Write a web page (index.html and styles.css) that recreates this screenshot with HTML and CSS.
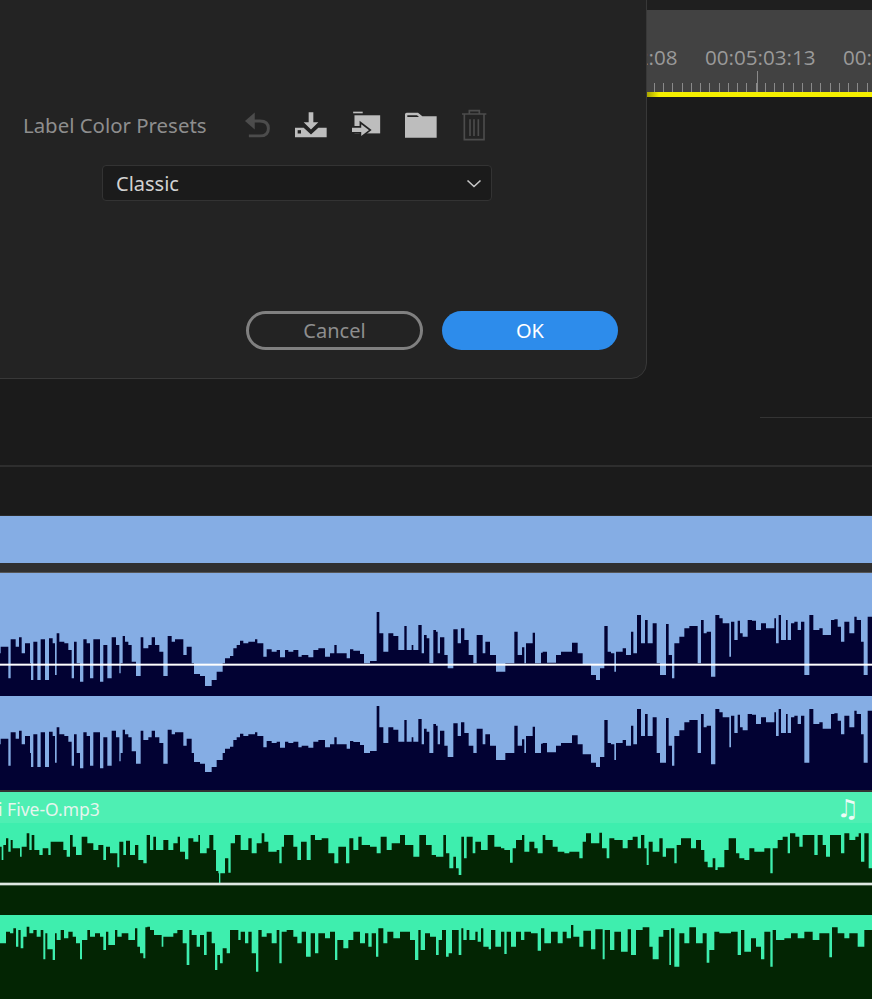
FILE: index.html
```html
<!DOCTYPE html>
<html lang="en">
<head>
    <meta charset="UTF-8">
    <title>Label Color Presets</title>
    <link rel="stylesheet" href="styles.css">
</head>
<body>
    <div class="upper">
        <div class="topbar"></div>
        <div class="ruler">
            <div class="times">
                <span>00:05:02:08</span>
                <span>00:05:03:13</span>
                <span>00:05:04:18</span>
            </div>
            <div class="ticks"><div class="major"></div></div>
        </div>
        <div class="playbar"></div>
        <div class="monitor"></div>
        <div class="monitor_line"></div>
        <div class="divider"></div>
        <div class="panel_end"></div>

        <div class="dialog">
            <div class="preset_row">
                <span class="preset_label">Label Color Presets</span>
                <svg class="icon" width="28" height="27" viewBox="728 60 86 82">
                    <path d="M764 64V116L734 90Z" fill="#4c4c4c"/>
                    <path d="M750 90H780Q806 90 806 113Q806 136 780 136H746" fill="none" stroke="#4c4c4c" stroke-width="9"/>
                </svg>
                <svg class="icon" width="32" height="27" viewBox="885 65 96 80">
                    <path d="M885 115H911L933 135L955 115H980V143H885Z" fill="#bdbdbd"/>
                    <path d="M926 68H940V98H955L933 120L911 98H926Z" fill="#bdbdbd"/>
                    <rect x="893" y="122" width="10" height="10" fill="#232323"/>
                </svg>
                <svg class="icon" width="30" height="27" viewBox="1050 62 90 82">
                    <rect x="1056" y="64" width="29" height="5" fill="#bdbdbd"/>
                    <rect x="1060" y="75" width="78" height="55" fill="#bdbdbd"/>
                    <path d="M1050 110H1078V97L1108 120L1078 143V128H1050Z" fill="#bdbdbd" stroke="#232323" stroke-width="5"/>
                </svg>
                <svg class="icon" width="32" height="26" viewBox="1213 63 96 78">
                    <path d="M1213 70Q1213 65 1218 65H1252L1265 76H1308V140H1213Z" fill="#bdbdbd"/>
                    <path d="M1220 78V73H1249L1255 78Z" fill="#232323"/>
                </svg>
                <svg class="icon" width="26" height="32" viewBox="1384 57 76 96">
                    <path d="M1386 72H1459M1408 72V62H1438V72M1393 72V149H1452V72M1410 88V138M1422 88V138M1435 88V138" fill="none" stroke="#4c4c4c" stroke-width="5"/>
                </svg>
            </div>
            <div class="dropdown">
                <span>Classic</span>
                <svg width="16" height="9" viewBox="0 0 16 9"><path d="M1.5 1.5L8 7.5L14.5 1.5" fill="none" stroke="#c8c8c8" stroke-width="1.6"/></svg>
            </div>
            <div class="buttons">
                <div class="btn cancel">Cancel</div>
                <div class="btn ok">OK</div>
            </div>
        </div>
    </div>

    <div class="clip_blue"></div>
    <div class="track_gap"></div>
    <svg class="wave" id="blue_wave" width="872" height="217" viewBox="0 0 2616 651"></svg>
    <div class="track_edge"></div>

    <div class="clip_green">
        <span class="clip_name">i Five-O.mp3</span>
        <span class="note">&#9835;</span>
    </div>
    <svg class="wave" id="green_wave" width="872" height="176" viewBox="0 0 2616 528"></svg>

    <script src="waves.js"></script>
</body>
</html>
```

FILE: styles.css
```css
html, body{
  margin:0;
  padding:0;
}
body{
  width:872px;
  height:999px;
  overflow:hidden;
  background:#1b1b1b;
  font-family:"Noto Sans", "Open Sans", sans-serif;
}
.upper{
  position:relative;
  height:516px;
  display:flex;
  flex-direction:column;
  overflow:hidden;
}
.topbar{
  height:10px;
  background:#1f1f1f;
}
.ruler{
  height:82px;
  margin-left:647px;
  background:#424242;
  display:flex;
  flex-direction:column;
  overflow:hidden;
}
.times{
  display:flex;
  gap:27px;
  margin:34px 0 0 -80px;
  height:27px;
  line-height:27px;
  font-family:"Open Sans", sans-serif;
  font-size:20.6px;
  color:#9a9a9a;
  white-space:nowrap;
}
.times span{
  flex:0 0 111px;
}
.ticks{
  position:relative;
  height:9px;
  margin-top:12px;
  background:repeating-linear-gradient(90deg, transparent 0, transparent 7px, #8a8a8a 7px, #8a8a8a 8px, transparent 8px, transparent 9.25px);
}
.ticks .major{
  position:absolute;
  left:110px;
  bottom:0;
  width:1px;
  height:21px;
  background:#8a8a8a;
}
.playbar{
  height:5px;
  margin-left:647px;
  background:linear-gradient(90deg, #a8a400 0, #f5f000 12px);
}
.monitor{
  height:320px;
}
.monitor_line{
  height:1px;
  margin-left:760px;
  background:#343434;
}
.divider{
  height:2px;
  margin-top:47px;
  background:#2e2e2e;
}
.panel_end{
  height:1px;
  margin-top:48px;
  background:#2a2a2a;
}

.dialog{
  position:absolute;
  left:-20px;
  top:-20px;
  width:667px;
  height:399px;
  box-sizing:border-box;
  padding:128px 28px 28px 42px;
  display:flex;
  flex-direction:column;
  background:#232323;
  border:1px solid #383838;
  border-radius:16px;
}
.preset_row{
  display:flex;
  align-items:center;
  height:31px;
  gap:24px;
}
.preset_label{
  width:196px;
  font-size:20.4px;
  color:#8e8e8e;
  white-space:nowrap;
}
.icon{
  flex:none;
}
.dropdown{
  display:flex;
  align-items:center;
  justify-content:space-between;
  box-sizing:border-box;
  width:390px;
  height:36px;
  margin:25px 0 0 79px;
  padding:0 9px 0 13px;
  background:#1b1b1b;
  border:1px solid #333;
  border-radius:4px;
  font-size:20px;
  color:#d2d2d2;
}
.buttons{
  display:flex;
  justify-content:flex-end;
  gap:19px;
  margin-top:auto;
}
.btn{
  box-sizing:border-box;
  width:176px;
  height:39px;
  border-radius:20px;
  text-align:center;
  font-size:20px;
  line-height:39px;
}
.cancel{
  width:177px;
  line-height:33px;
  border:3px solid #808080;
  color:#8e8e8e;
}
.ok{
  background:#2d8ceb;
  color:#fff;
}

.clip_blue{
  height:47px;
  background:#85ade4;
}
.track_gap{
  height:9px;
  background:#303030;
  border-bottom:1px solid #555;
}
.wave{
  display:block;
}
#blue_wave{
  background:#85ade4;
}
#green_wave{
  background:#3eeeae;
}
.track_edge{
  height:2px;
  background:#333;
}
.clip_green{
  display:flex;
  align-items:center;
  justify-content:space-between;
  box-sizing:border-box;
  height:31px;
  padding:3px 13px 0 0;
  background:#4eefb3;
}
.clip_name{
  margin-left:-2px;
  font-size:17.5px;
  color:#e6f5ee;
  white-space:nowrap;
}
.note{
  font-family:"DejaVu Sans", sans-serif;
  font-size:25px;
  font-weight:bold;
  line-height:24px;
  color:#eefbf6;
}
```

FILE: waves.js
```js
// envelopes are [end x, top y] pairs, read at 3x of the page size
var blue_left = [2,160,7,140,25,140,32,235,35,118,47,118,57,140,65,112,75,160,90,130,93,190,100,240,112,125,122,240,135,118,147,240,158,115,165,130,170,225,178,100,193,125,205,130,215,150,222,235,230,125,240,190,250,245,260,118,270,130,280,235,300,118,310,245,322,135,335,235,348,112,358,135,362,220,368,190,375,108,385,125,395,135,408,185,422,228,430,112,445,145,455,135,465,112,478,135,490,155,503,228,515,108,525,125,550,118,560,165,575,140,582,190,600,222,615,228,635,258,650,240,668,215,675,190,690,175,700,168,710,145,720,135,730,122,745,130,765,125,772,118,790,130,800,170,815,148,830,155,840,150,855,172,865,150,880,155,895,150,905,170,925,165,940,172,955,150,975,145,990,170,1003,160,1010,135,1040,160,1050,175,1060,148,1080,152,1092,162,1110,190,1130,183,1138,36,1150,100,1165,155,1180,100,1195,108,1213,150,1220,78,1235,150,1240,135,1255,150,1265,75,1272,160,1280,105,1288,115,1300,190,1308,90];
var blue_right = [5,95,12,160,25,112,35,165,52,205,65,88,75,130,85,85,98,120,112,165,122,190,140,105,148,160,162,125,180,165,208,215,235,190,245,95,258,165,265,142,270,190,290,130,297,98,315,190,320,158,333,155,360,188,375,165,408,155,425,128,440,160,465,195,480,225,492,240,505,205,515,78,525,155,535,160,540,215,560,155,570,145,585,165,592,95,603,160,615,45,627,130,635,60,650,130,662,70,672,190,690,225,698,72,708,165,715,235,730,130,745,110,760,85,785,78,795,190,803,60,812,100,825,95,838,230,850,45,860,55,880,70,885,170,895,65,905,120,912,62,920,100,935,110,948,60,960,62,975,90,990,70,1015,85,1020,55,1028,130,1035,45,1050,120,1055,60,1065,120,1075,70,1085,65,1095,90,1105,65,1120,225,1132,45,1150,90,1160,85,1185,105,1195,60,1205,58,1215,80,1225,125,1240,65,1255,100,1262,50,1275,60,1283,125,1295,225,1308,50];
var green_left = [5,170,10,210,18,165,25,145,32,185,38,150,60,175,65,200,80,170,88,130,95,180,103,135,118,180,128,195,145,175,152,195,190,155,200,180,210,200,218,135,228,170,245,195,262,140,280,160,295,180,310,165,318,210,330,170,352,190,358,232,370,155,378,195,390,152,405,195,415,165,430,210,440,220,450,135,460,180,468,140,490,180,505,150,520,180,533,160,540,140,555,185,565,208,580,145,595,155,600,135,620,190,628,175,640,135,648,180,655,243,657,250,661,280,675,250,685,205,692,248,705,160,722,135,745,180,755,145,770,190,785,160,793,130,805,155,830,185,838,180,845,220,852,170,880,135,892,170,903,210,920,155,932,210,945,135,965,150,985,145,1003,190,1015,220,1028,170,1038,170,1048,220,1060,145,1075,180,1085,140,1110,165,1130,170,1142,190,1160,140,1175,180,1200,160,1215,135,1240,165,1258,200,1278,135,1295,165,1308,195];
var green_left2 = [18,460,30,425,40,430,48,415,55,470,62,420,70,475,80,440,88,410,100,430,110,420,122,440,130,420,136,508,142,430,158,478,165,510,170,430,182,450,192,420,205,445,218,425,228,440,240,460,246,508,262,450,270,420,285,440,300,430,310,440,318,480,325,425,345,465,352,420,365,440,385,430,405,450,412,415,420,470,430,490,436,505,442,412,450,410,462,420,485,435,490,470,520,440,532,430,548,420,560,460,568,525,575,420,590,435,600,470,612,435,620,495,635,425,645,460,652,540,660,495,668,520,680,475,690,490,700,420,715,420,722,450,735,425,745,460,755,425,768,490,775,545,785,420,800,440,815,430,830,460,838,420,845,520,860,425,880,420,892,440,905,460,918,425,932,500,945,430,955,490,975,430,990,445,1005,425,1012,510,1030,450,1045,475,1060,450,1080,425,1095,460,1105,430,1115,470,1128,430,1135,500,1150,415,1162,460,1180,425,1200,445,1230,425,1245,450,1255,510,1262,420,1275,480,1290,430,1308,440];
var green_right = [22,200,30,135,40,190,52,235,60,200,68,235,76,255,84,140,92,205,110,140,118,190,135,155,155,180,175,135,195,170,205,175,222,180,230,218,240,175,258,150,265,135,280,185,295,155,305,175,320,190,328,135,350,150,365,170,385,185,400,190,430,185,440,205,450,155,465,130,490,160,498,128,512,175,520,205,535,145,560,150,575,175,590,150,605,140,615,175,625,135,632,175,638,225,650,155,670,185,680,145,690,200,715,175,722,220,735,165,765,145,780,175,795,150,805,180,815,215,830,232,838,205,845,240,865,232,878,180,900,145,910,190,925,205,940,210,955,175,985,185,1003,175,1010,250,1025,175,1040,150,1055,140,1062,190,1078,130,1090,140,1100,170,1135,135,1145,195,1160,135,1170,165,1182,200,1215,135,1225,190,1240,130,1258,150,1268,140,1275,130,1285,215,1298,130,1308,235];
var green_right2 = [8,495,18,450,30,420,38,500,48,490,68,420,76,495,82,415,92,450,100,420,118,450,125,425,135,455,142,415,158,470,165,478,178,420,195,470,205,425,212,492,225,425,240,470,255,425,265,450,285,425,305,430,315,482,325,415,345,460,365,425,380,460,392,425,405,445,412,405,430,440,442,470,465,422,478,478,500,418,506,508,522,420,535,480,555,425,575,485,585,418,600,495,620,420,640,412,650,470,668,508,682,440,700,420,705,525,715,415,730,530,745,430,760,460,780,412,800,460,812,430,820,518,835,480,850,425,885,430,905,425,915,495,925,420,945,485,960,445,975,470,985,508,1003,425,1010,530,1020,420,1045,450,1065,445,1085,430,1105,445,1130,425,1150,450,1180,430,1188,502,1205,412,1225,430,1240,445,1265,430,1285,470,1308,420];

var SVG_NS = "http://www.w3.org/2000/svg";

function add_el(parent, tag, attrs){
  var el = document.createElementNS(SVG_NS, tag);
  for (var k in attrs){
    el.setAttribute(k, attrs[k]);
  }
  parent.appendChild(el);
  return el;
}

// left half then right half, as one step outline down to the bottom edge
function wave_path(left, right, bottom){
  var d = "M0 " + bottom;
  for (var i = 0; i < left.length; i += 2){
    d += "V" + left[i + 1] + "H" + left[i];
  }
  for (var j = 0; j < right.length; j += 2){
    d += "V" + right[j + 1] + "H" + (1308 + right[j]);
  }
  return d + "V" + bottom + "Z";
}

// second blue channel follows the first one, a little flatter
function second_channel(list){
  var out = [];
  for (var i = 0; i < list.length; i += 2){
    var y = list[i + 1];
    out.push(list[i], Math.round(y + 282 - Math.max(0, y - 100) * 0.15));
  }
  return out;
}

var blue = add_el(document.getElementById("blue_wave"), "g", {transform: "translate(0,81)"});
add_el(blue, "path", {d: wave_path(second_channel(blue_left), second_channel(blue_right), 570), fill: "#020233"});
add_el(blue, "path", {d: wave_path(blue_left, blue_right, 288), fill: "#020233"});
add_el(blue, "rect", {x: 0, y: 191, width: 2616, height: 6, fill: "#fff"});

var green = add_el(document.getElementById("green_wave"), "g", {transform: "translate(0,-99)"});
add_el(green, "path", {d: wave_path(green_left2, green_right2, 627), fill: "#032503"});
add_el(green, "rect", {x: 0, y: 290, width: 2616, height: 85, fill: "#032503"});
add_el(green, "path", {d: wave_path(green_left, green_right, 375), fill: "#032503"});
add_el(green, "rect", {x: 0, y: 278, width: 2616, height: 8, fill: "#dfe8e2"});
```
